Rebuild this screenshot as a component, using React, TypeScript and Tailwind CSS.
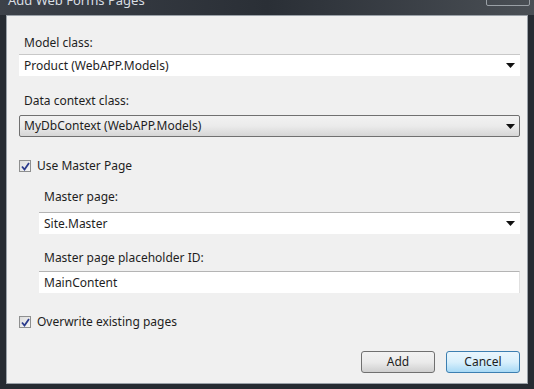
import React from "react";

const font = { fontFamily: '"Segoe UI", "Noto Sans", "Open Sans", sans-serif' };

const Arrow: React.FC = () => (
  <svg width="9" height="5" viewBox="0 0 9 5" className="shrink-0">
    <path d="M0 0 H9 L4.5 5 Z" fill="#111" />
  </svg>
);

const Check: React.FC<{ label: string }> = ({ label }) => (
  <label className="flex items-center gap-[6px] text-[12px] text-[#1e1e1e]">
    <span className="w-[12px] h-[12px] border border-[#8e8f8f] bg-gradient-to-br from-[#dcdcdc] to-[#f7f7f7] flex items-center justify-center">
      <svg width="9" height="9" viewBox="0 0 9 9">
        <path d="M1 4.5 L3.5 7.5 L8 1" stroke="#2a3a8c" strokeWidth="1.8" fill="none" />
      </svg>
    </span>
    {label}
  </label>
);

const App: React.FC = () => {
  return (
    <div className="w-[534px] h-[389px] bg-[#262b32] flex flex-col overflow-hidden" style={font}>
      {/* title bar */}
      <div className="h-[15px] relative bg-gradient-to-r from-[#3c4149] via-[#2a2f36] to-[#4a4f55] overflow-hidden">
        <div className="absolute left-[8px] top-[-9px] text-[13px] leading-[18px] text-[#d8dde2]">Add Web Forms Pages</div>
        <div className="absolute right-[4px] top-[-6px] w-[44px] h-[12px] border border-[#9aa0a6] rounded-[2px]" />
      </div>
      {/* body */}
      <div className="flex-1 flex px-[6px] pb-[5px]">
        <div className="flex-1 border border-[#9aa1a8] bg-[#f0f0f0] flex flex-col pl-[12px] pr-[7px] text-[12px] text-[#1e1e1e]">
          <div className="pt-[19px] pl-[5px] leading-[16px]">Model class:</div>
          <div className="mt-[3px] h-[22px] bg-white border-t border-[#c8c8c8] flex items-center justify-between pl-[5px] pr-[5px]">
            <span>Product (WebAPP.Models)</span>
            <Arrow />
          </div>
          <div className="mt-[17px] pl-[5px] leading-[16px]">Data context class:</div>
          <div className="mt-[6px] h-[22px] rounded-[2px] border border-[#707070] bg-gradient-to-b from-[#f2f2f2] via-[#ebebeb] to-[#d6d6d6] flex items-center justify-between pl-[4px] pr-[4px]">
            <span>MyDbContext (WebAPP.Models)</span>
            <Arrow />
          </div>
          <div className="mt-[20px]">
            <Check label="Use Master Page" />
          </div>
          <div className="pl-[20px] flex flex-col">
            <div className="mt-[14px] pl-[5px] leading-[16px]">Master page:</div>
            <div className="mt-[7px] h-[22px] bg-white border-t border-[#b4b4b4] flex items-center justify-between pl-[5px] pr-[5px]">
              <span>Site.Master</span>
              <Arrow />
            </div>
            <div className="mt-[16px] pl-[5px] leading-[16px]">Master page placeholder ID:</div>
            <div className="mt-[5px] h-[22px] bg-white border-t border-[#b4b4b4] border-r border-r-[#e0e0e0] flex items-center pl-[5px]">
              <span>MainContent</span>
            </div>
          </div>
          <div className="mt-[20px]">
            <Check label="Overwrite existing pages" />
          </div>
          <div className="mt-[20px] flex justify-end gap-[11px]">
            <button className="w-[74px] h-[22px] rounded-[3px] border border-[#707070] bg-gradient-to-b from-[#f2f2f2] via-[#ebebeb] to-[#cfcfcf] text-[12px]">
              Add
            </button>
            <button className="w-[74px] h-[22px] rounded-[3px] border border-[#3c7fb1] bg-gradient-to-b from-[#eaf6fd] via-[#d9f0fc] to-[#a7d9f5] text-[12px]">
              Cancel
            </button>
          </div>
        </div>
      </div>
    </div>
  );
};

export default App;
